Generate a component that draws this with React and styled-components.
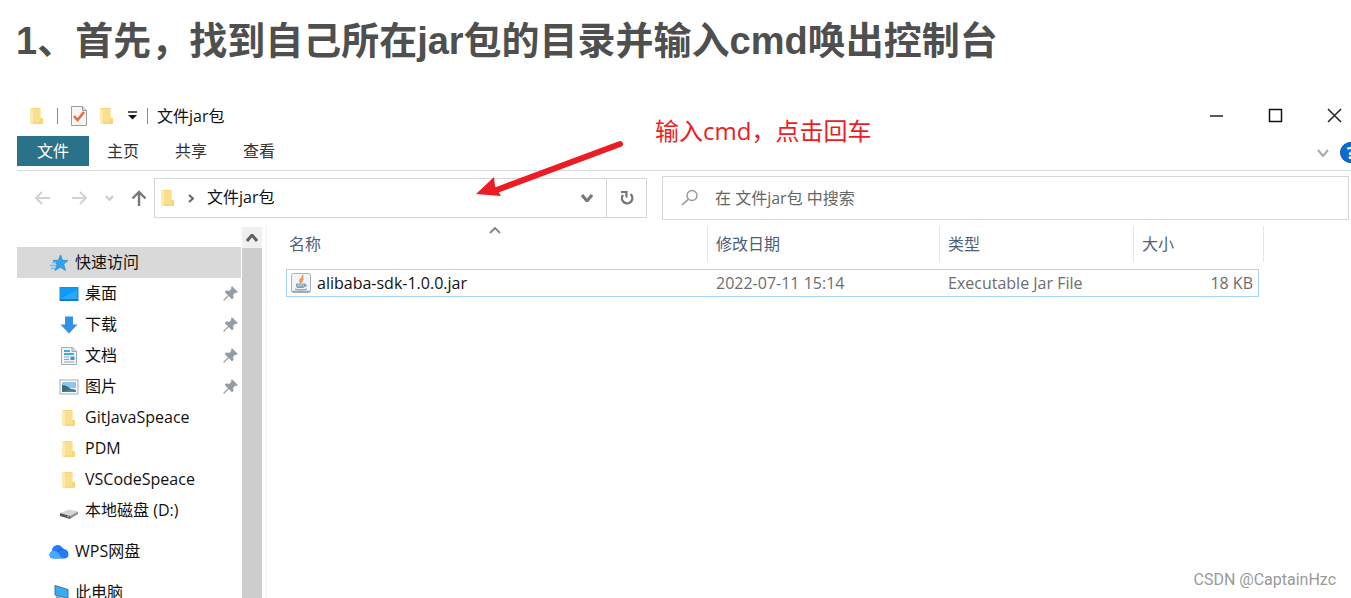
import styled, { createGlobalStyle } from 'styled-components';

const GlobalStyle = createGlobalStyle`
  * {
    box-sizing: border-box;
  }

  body {
    margin: 0;
    background-color: #fff;
    font-family: 'Open Sans', 'Noto Sans CJK SC', sans-serif;
    font-size: 16px;
    line-height: 20px;
    color: #111;
  }

  button,
  input {
    font: inherit;
    color: inherit;
    margin: 0;
    padding: 0;
    border: none;
    background: transparent;
  }

  svg {
    display: block;
    flex-shrink: 0;
  }
`;

const Page = styled.div`
  height: 100vh;
  display: flex;
  flex-direction: column;
  overflow: hidden;
  position: relative;
`;

const Heading = styled.h1`
  margin: 0;
  padding: 17px 16px 32px;
  font-family: 'Liberation Sans', 'Noto Sans CJK SC', sans-serif;
  font-size: 38px;
  line-height: 48px;
  font-weight: 700;
  color: #4f4f4f;
  white-space: nowrap;
`;

const Explorer = styled.section`
  flex: 1;
  min-height: 0;
  margin-left: 17px;
  display: flex;
  flex-direction: column;
  position: relative;
`;

const TitleBar = styled.header`
  height: 39px;
  padding: 0 9px 2px 13px;
  display: flex;
  align-items: center;
  justify-content: space-between;
`;

const QuickTools = styled.div`
  display: flex;
  align-items: center;
  gap: 13px;
`;

const ToolButton = styled.button`
  display: flex;
  align-items: center;
  justify-content: center;
`;

const TitleGroup = styled.div`
  display: flex;
  align-items: center;
  gap: 9px;
`;

const Separator = styled.span`
  width: 1px;
  height: 16px;
  background-color: #8a8a8a;
`;

const WindowTitle = styled.span`
  font-size: 16px;
`;

const WindowControls = styled.div`
  display: flex;
  align-items: center;
  gap: 44px;
`;

const Ribbon = styled.nav`
  height: 35px;
  padding-bottom: 4px;
  border-bottom: 1px solid #dadbdc;
  display: flex;
  align-items: stretch;
  overflow: hidden;
`;

const Tab = styled.button`
  padding: 0 ${props => (props.$active ? '20px' : '18px')};
  background-color: ${props => (props.$active ? '#2a7289' : 'transparent')};
  color: ${props => (props.$active ? '#fff' : '#333')};
`;

const RibbonEnd = styled.div`
  margin-left: auto;
  margin-right: -10px;
  padding-top: 3px;
  display: flex;
  align-items: center;
  gap: 11px;
`;

const HelpButton = styled.button`
  width: 21px;
  height: 21px;
  border: 1px solid #0b4f9c;
  border-radius: 50%;
  background-color: #0a6bd0;
  color: #fff;
  font-weight: 700;
`;

const AddressRow = styled.div`
  padding: 5px 2px 6px 17px;
  display: flex;
  align-items: center;
`;

const NavButtons = styled.div`
  width: 120px;
  flex-shrink: 0;
  display: flex;
  align-items: center;
  gap: 17px;
`;

const HistoryButtons = styled.div`
  display: flex;
  align-items: center;
  gap: 22px;
`;

const AddressBar = styled.div`
  width: 493px;
  height: 40px;
  margin-right: 15px;
  border: 1px solid #d6d6d6;
  display: flex;
  align-items: center;
`;

const AddressPath = styled.div`
  flex: 1;
  padding: 0 13px 0 6px;
  display: flex;
  align-items: center;
  gap: 13px;
`;

const PathButton = styled.button`
  padding-bottom: 2px;
`;

const DropButton = styled(ToolButton)`
  margin-left: auto;
`;

const RefreshButton = styled(ToolButton)`
  width: 40px;
  height: 100%;
  border-left: 1px solid #d6d6d6;
`;

const SearchBox = styled.label`
  flex: 1;
  height: 44px;
  padding: 0 18px;
  border: 1px solid #d6d6d6;
  display: flex;
  align-items: center;
  gap: 16px;
`;

const SearchInput = styled.input`
  flex: 1;
  min-width: 0;
  outline: none;

  &::placeholder {
    color: #666;
    opacity: 1;
  }
`;

const Body = styled.div`
  flex: 1;
  min-height: 0;
  display: flex;
`;

const Sidebar = styled.aside`
  width: 225px;
  flex-shrink: 0;
  padding: 21px 1px 0 0;
  overflow: hidden;
`;

const TreeList = styled.ul`
  list-style: none;
  margin: 0 0 10px;
  padding: 0;
`;

const TreeItem = styled.li`
  height: 31px;
  padding: 0 3px 0 ${props => (props.$child ? '42px' : '32px')};
  background-color: ${props => (props.$selected ? '#d9d9d9' : 'transparent')};
  display: flex;
  align-items: center;
  justify-content: space-between;
`;

const TreeLink = styled.a`
  color: inherit;
  text-decoration: none;
  display: flex;
  align-items: center;
  gap: 6px;
  white-space: nowrap;
`;

const TreeText = styled.span`
  padding-bottom: 2px;
`;

const ScrollTrack = styled.div`
  width: 20px;
  padding-top: 1px;
  display: flex;
  flex-direction: column;
`;

const ScrollButton = styled.button`
  height: 21px;
  background-color: #f0f0f0;
  display: flex;
  align-items: center;
  justify-content: center;
`;

const ScrollThumb = styled.div`
  flex: 1;
  background-color: #cdcdcd;
`;

const Main = styled.main`
  flex: 1;
  margin-left: 4px;
  padding-left: 19px;
  border-left: 1px solid #f2f2f2;
`;

const FileTable = styled.table`
  width: 978px;
  table-layout: fixed;
  border-collapse: separate;
  border-spacing: 0;
`;

const HeadCell = styled.th`
  padding: 0 0 7px;
  text-align: left;
  font-weight: 400;
  color: #4c607a;
`;

const HeadLabel = styled.div`
  height: 36px;
  padding-left: ${props => (props.$first ? '3px' : '8px')};
  border-right: 1px solid #e5e5e5;
  display: flex;
  align-items: center;
  position: relative;
`;

const SortMark = styled.span`
  position: absolute;
  top: 1px;
  left: 50%;
  margin-left: -8px;
`;

const Cell = styled.td`
  height: 28px;
  padding: 0 5px 1px 8px;
  border: solid #a6d5fc;
  border-width: 1px 0;
  color: #6d6d6d;
  text-align: ${props => (props.$right ? 'right' : 'left')};

  &:first-child {
    padding-left: 3px;
    border-left-width: 1px;
    color: #111;
  }

  &:last-child {
    border-right-width: 1px;
  }
`;

const FileName = styled.span`
  display: flex;
  align-items: center;
  gap: 5px;
`;

const Note = styled.p`
  position: absolute;
  top: 17px;
  left: 638px;
  margin: 0;
  font-size: 24px;
  line-height: 34px;
  color: #ed1c24;
  white-space: nowrap;
`;

const PointerArrow = styled.svg`
  position: absolute;
  top: 43px;
  left: 457px;
`;

const Watermark = styled.footer`
  position: absolute;
  right: 15px;
  bottom: 8px;
  font-family: Roboto, sans-serif;
  color: #999;
`;

const FolderIcon = ({ width = 14 }) => (
  <svg width={width} height="18" viewBox={width === 20 ? '-3 0 20 18' : '0 0 14 18'}>
    <path d="M0 1h10.500v10H13v6H1.500L0 16z" fill="#f8d67a" />
    <path d="M3 2h7v13H3z" fill="#fbdf8e" />
    <path d="M0 1l3 1v15.500L0 16z" fill="#fdeab0" />
  </svg>
);

const CheckDocIcon = () => (
  <svg width="16" height="20" viewBox="0 0 16 20">
    <path d="M.5.500h11l4 4v15H.5z" fill="#f5f5f5" stroke="#9b9b9b" />
    <path d="M11.500.500v4h4" fill="#ddd" stroke="#9b9b9b" />
    <path d="M3 10l3.500 4L13 6" fill="none" stroke="#e9693b" strokeWidth="2.500" />
  </svg>
);

const CustomizeIcon = () => (
  <svg width="11" height="9" viewBox="0 0 11 9">
    <path d="M1 1h9" stroke="#222" strokeWidth="1.500" />
    <path d="M1 4h9L5.500 8.500z" fill="#111" />
  </svg>
);

const MinimizeIcon = () => (
  <svg width="15" height="15" viewBox="0 0 15 15">
    <path d="M1 8h13" stroke="#222" strokeWidth="1.500" />
  </svg>
);

const MaximizeIcon = () => (
  <svg width="15" height="15" viewBox="0 0 15 15">
    <rect x="1.500" y="1.500" width="12" height="12" fill="none" stroke="#111" strokeWidth="1.500" />
  </svg>
);

const CloseIcon = () => (
  <svg width="15" height="15" viewBox="0 0 15 15">
    <path d="M1 1l13 13M14 1L1 14" stroke="#222" strokeWidth="1.500" />
  </svg>
);

const Chevron = ({ width, height, color, up, right, weight = 2 }) => {
  let points = `1,1 ${width / 2},${height - 1} ${width - 1},1`;
  if (up) points = `1,${height - 1} ${width / 2},1 ${width - 1},${height - 1}`;
  if (right) points = `1,1 ${width - 1},${height / 2} 1,${height - 1}`;
  return (
    <svg width={width} height={height} viewBox={`0 0 ${width} ${height}`}>
      <polyline points={points} fill="none" stroke={color} strokeWidth={weight} />
    </svg>
  );
};

const BackIcon = () => (
  <svg width="16" height="14" viewBox="0 0 16 14">
    <path d="M16 7H2M8 1L2 7l6 6" fill="none" stroke="#d2d2d2" strokeWidth="2" />
  </svg>
);

const ForwardIcon = () => (
  <svg width="16" height="14" viewBox="0 0 16 14">
    <path d="M0 7h14M8 1l6 6-6 6" fill="none" stroke="#d2d2d2" strokeWidth="2" />
  </svg>
);

const UpIcon = () => (
  <svg width="16" height="16" viewBox="0 0 16 16">
    <path d="M8 16V2M1.500 8.500L8 2l6.500 6.500" fill="none" stroke="#777" strokeWidth="2.400" />
  </svg>
);

const RefreshIcon = () => (
  <svg width="14" height="16" viewBox="0 0 14 16">
    <path d="M10.500 4.200A5.200 5.200 0 1 1 3 5" fill="none" stroke="#757575" strokeWidth="2.400" />
    <path d="M1 2h5.500v5.500" fill="none" stroke="#757575" strokeWidth="2.200" />
  </svg>
);

const SearchIcon = () => (
  <svg width="18" height="18" viewBox="0 0 18 18">
    <circle cx="11" cy="6.500" r="5" fill="none" stroke="#9a9a9a" strokeWidth="1.400" />
    <path d="M7.200 10.300L1 16" stroke="#9a9a9a" strokeWidth="1.600" />
  </svg>
);

const StarIcon = () => (
  <svg width="20" height="18" viewBox="0 0 20 18">
    <path
      d="M11.500 1l2 5.300 5.500.300-4.300 3.500 1.800 6.400-5.200-3.300L6 16.500l2-6.300L4 6.500l5.500-.300z"
      fill="#2fa3ee"
      stroke="#1d86d1"
      strokeWidth=".7"
    />
    <path d="M3 8.500h4M1 11.500h6M2 14.500h4" stroke="#6cbdf0" strokeWidth="1.500" />
  </svg>
);

const DesktopIcon = () => (
  <svg width="20" height="16" viewBox="0 0 20 16">
    <rect x="1" y="1.500" width="18" height="13" fill="#0e9bf7" stroke="#1b8de0" />
    <path d="M2 12.500L18 4v10H2z" fill="#28a9ff" />
    <path d="M1 14h18" stroke="#1273b8" strokeWidth="1.500" />
  </svg>
);

const DownloadIcon = () => (
  <svg width="20" height="18" viewBox="0 0 20 18">
    <path d="M6 .5h8v8h4.500L10 17.500 1.500 8.500H6z" fill="#3291e3" />
  </svg>
);

const DocumentIcon = () => (
  <svg width="20" height="18" viewBox="0 0 20 18">
    <path d="M2.500.500h11l4 3.500v13.500h-15z" fill="#f3f6f8" stroke="#a3abb1" />
    <path d="M13 .5V4.500h4.500" fill="#d4dadd" stroke="#a3abb1" />
    <path d="M5 4h6M5 7h10" stroke="#47a8e6" strokeWidth="2" />
    <path d="M5 10h5M5 12.500h5M5 15h10" stroke="#8aa2b4" />
    <path d="M11.500 9.500h4V13h-4z" fill="#3a94d6" />
  </svg>
);

const PictureIcon = () => (
  <svg width="20" height="16" viewBox="0 0 20 16">
    <rect x="1" y="1" width="18" height="14" fill="#fff" stroke="#a5a9ac" />
    <path d="M3 3h14v6H3z" fill="#8fc4f5" />
    <path d="M3 6q5 0 8 3.500l6 1.500v2H3z" fill="#35716e" />
    <path d="M8 11.500q5-1.500 9-.5v2H3z" fill="#4a82ae" />
  </svg>
);

const DriveIcon = () => (
  <svg width="20" height="18" viewBox="0 0 20 18">
    <path d="M1 11l9-3.500 9 2-8 4.500z" fill="#d5d5d5" />
    <path d="M1 11l10 3v3L1 14z" fill="#555" />
    <path d="M11 14l8-4.500V12l-8 5z" fill="#929292" />
    <path d="M8 14.500l2 .5" stroke="#8de08d" />
  </svg>
);

const CloudIcon = () => (
  <svg width="20" height="16" viewBox="0 0 20 16">
    <path d="M3 7Q3 2 8 1q4-.5 6 4 5 0 5.500 5 0 4.500-4.500 4.500H5Q.5 14.500.500 11 .500 8 3 7z" fill="#237cf3" />
    <path d="M3 7q5-1 7 3l3 4.500H5Q.5 14.500.500 11 .500 8 3 7z" fill="#4ca6ff" />
    <path d="M8 7.500q4-3 7-2.500" fill="none" stroke="#1457bf" strokeWidth=".8" />
  </svg>
);

const ComputerIcon = () => (
  <svg width="20" height="18" viewBox="0 0 20 18">
    <path d="M6 1.500l13 4v9L6 11z" fill="#35acf5" stroke="#55717f" />
    <path d="M7 12l9 3v2l-9-3z" fill="#8b989e" />
  </svg>
);

const PinIcon = () => (
  <svg width="15" height="15" viewBox="0 0 15 15">
    <path
      d="M9 .5L14.500 6l-1.500.700-1-.2-2.200 2.500.4 3L9 13 5.800 9.800 1 14.500.500 14l4.700-4.800L2 6l1-1.200 3.200.4L8.500 3l-.2-1.200z"
      fill="#929ca5"
      stroke="#929ca5"
      strokeWidth=".6"
    />
  </svg>
);

const JarIcon = () => (
  <svg width="22" height="22" viewBox="0 0 22 22">
    <rect x="1.500" y="1.500" width="19" height="19" rx="2" fill="#f1f4f6" stroke="#a9b2b9" />
    <path d="M2 19.500h18" stroke="#9aa5ad" strokeWidth="1.500" />
    <path d="M12.500 3q1 2.500-2 4.300-1.500 1.700.500 4M13.500 6.500q-2.500 1.500-1.500 4" fill="none" stroke="#f09a5c" strokeWidth="1.700" />
    <path d="M6.500 12h8q0 3.500-2 3.500h-4q-2 0-2-3.500zM14.500 12.500q2.500 0 1.500 1.500l-2 .7M5 17q6 1.800 12 0" fill="none" stroke="#7d9bb2" strokeWidth="1.200" />
    <path d="M7 12.500h7l-1 2.500H8z" fill="#9db5c7" />
  </svg>
);

const tabs = ['主页', '共享', '查看'];

const quickItems = [
  { text: '桌面', icon: <DesktopIcon />, pinned: true },
  { text: '下载', icon: <DownloadIcon />, pinned: true },
  { text: '文档', icon: <DocumentIcon />, pinned: true },
  { text: '图片', icon: <PictureIcon />, pinned: true },
  { text: 'GitJavaSpeace', icon: <FolderIcon width={20} /> },
  { text: 'PDM', icon: <FolderIcon width={20} /> },
  { text: 'VSCodeSpeace', icon: <FolderIcon width={20} /> },
  { text: '本地磁盘 (D:)', icon: <DriveIcon /> }
];

const files = [
  { name: 'alibaba-sdk-1.0.0.jar', date: '2022-07-11 15:14', type: 'Executable Jar File', size: '18 KB' }
];

const TreeNode = ({ item, child, selected }) => (
  <TreeItem $child={child} $selected={selected}>
    <TreeLink href="#">
      {item.icon}
      <TreeText>{item.text}</TreeText>
    </TreeLink>
    {item.pinned && <PinIcon />}
  </TreeItem>
);

const App = () => (
  <Page>
    <GlobalStyle />
    <Heading>1、首先，找到自己所在jar包的目录并输入cmd唤出控制台</Heading>

    <Explorer>
      <TitleBar>
        <QuickTools>
          <FolderIcon />
          <Separator />
          <ToolButton aria-label="属性"><CheckDocIcon /></ToolButton>
          <ToolButton aria-label="新建文件夹"><FolderIcon /></ToolButton>
          <TitleGroup>
            <ToolButton aria-label="自定义快速访问工具栏"><CustomizeIcon /></ToolButton>
            <Separator />
            <WindowTitle>文件jar包</WindowTitle>
          </TitleGroup>
        </QuickTools>
        <WindowControls>
          <ToolButton aria-label="最小化"><MinimizeIcon /></ToolButton>
          <ToolButton aria-label="最大化"><MaximizeIcon /></ToolButton>
          <ToolButton aria-label="关闭"><CloseIcon /></ToolButton>
        </WindowControls>
      </TitleBar>

      <Ribbon>
        <Tab $active>文件</Tab>
        {tabs.map(tab => (
          <Tab key={tab}>{tab}</Tab>
        ))}
        <RibbonEnd>
          <ToolButton aria-label="展开功能区">
            <Chevron width={12} height={8} color="#aaa" />
          </ToolButton>
          <HelpButton aria-label="帮助">?</HelpButton>
        </RibbonEnd>
      </Ribbon>

      <AddressRow>
        <NavButtons>
          <HistoryButtons>
            <ToolButton aria-label="后退"><BackIcon /></ToolButton>
            <ToolButton aria-label="前进"><ForwardIcon /></ToolButton>
          </HistoryButtons>
          <ToolButton aria-label="最近浏览的位置">
            <Chevron width={9} height={6} color="#ccc" />
          </ToolButton>
          <ToolButton aria-label="上移"><UpIcon /></ToolButton>
        </NavButtons>
        <AddressBar>
          <AddressPath>
            <FolderIcon />
            <Chevron width={6} height={9} color="#666" right />
            <PathButton>文件jar包</PathButton>
            <DropButton aria-label="以前的位置">
              <Chevron width={12} height={8} color="#777" weight={3} />
            </DropButton>
          </AddressPath>
          <RefreshButton aria-label="刷新"><RefreshIcon /></RefreshButton>
        </AddressBar>
        <SearchBox>
          <SearchIcon />
          <SearchInput type="text" aria-label="搜索" placeholder="在 文件jar包 中搜索" />
        </SearchBox>
      </AddressRow>

      <Body>
        <Sidebar>
          <TreeList>
            <TreeNode item={{ text: '快速访问', icon: <StarIcon /> }} selected />
            {quickItems.map(item => (
              <TreeNode key={item.text} item={item} child />
            ))}
          </TreeList>
          <TreeList>
            <TreeNode item={{ text: 'WPS网盘', icon: <CloudIcon /> }} />
          </TreeList>
          <TreeList>
            <TreeNode item={{ text: '此电脑', icon: <ComputerIcon /> }} />
          </TreeList>
        </Sidebar>
        <ScrollTrack>
          <ScrollButton aria-label="向上滚动">
            <Chevron width={12} height={8} color="#606060" weight={3} up />
          </ScrollButton>
          <ScrollThumb />
        </ScrollTrack>
        <Main>
          <FileTable>
            <colgroup>
              <col width="422" />
              <col width="232" />
              <col width="194" />
              <col width="125" />
              <col width="5" />
            </colgroup>
            <thead>
              <tr>
                <HeadCell>
                  <HeadLabel $first>
                    名称
                    <SortMark><Chevron width={12} height={7} color="#888" up /></SortMark>
                  </HeadLabel>
                </HeadCell>
                <HeadCell><HeadLabel>修改日期</HeadLabel></HeadCell>
                <HeadCell><HeadLabel>类型</HeadLabel></HeadCell>
                <HeadCell colSpan={2}><HeadLabel>大小</HeadLabel></HeadCell>
              </tr>
            </thead>
            <tbody>
              {files.map(file => (
                <tr key={file.name}>
                  <Cell><FileName><JarIcon />{file.name}</FileName></Cell>
                  <Cell>{file.date}</Cell>
                  <Cell>{file.type}</Cell>
                  <Cell $right>{file.size}</Cell>
                </tr>
              ))}
            </tbody>
          </FileTable>
        </Main>
      </Body>

      <Note>输入cmd，点击回车</Note>
      <PointerArrow width="152" height="62" viewBox="0 0 152 62" aria-hidden="true">
        <path d="M146 4L20 51" fill="none" stroke="#ed1c24" strokeWidth="6" strokeLinecap="round" />
        <path d="M2 54L20 37l1 9 6 10z" fill="#ed1c24" />
      </PointerArrow>
    </Explorer>

    <Watermark>CSDN @CaptainHzc</Watermark>
  </Page>
);

export default App;
